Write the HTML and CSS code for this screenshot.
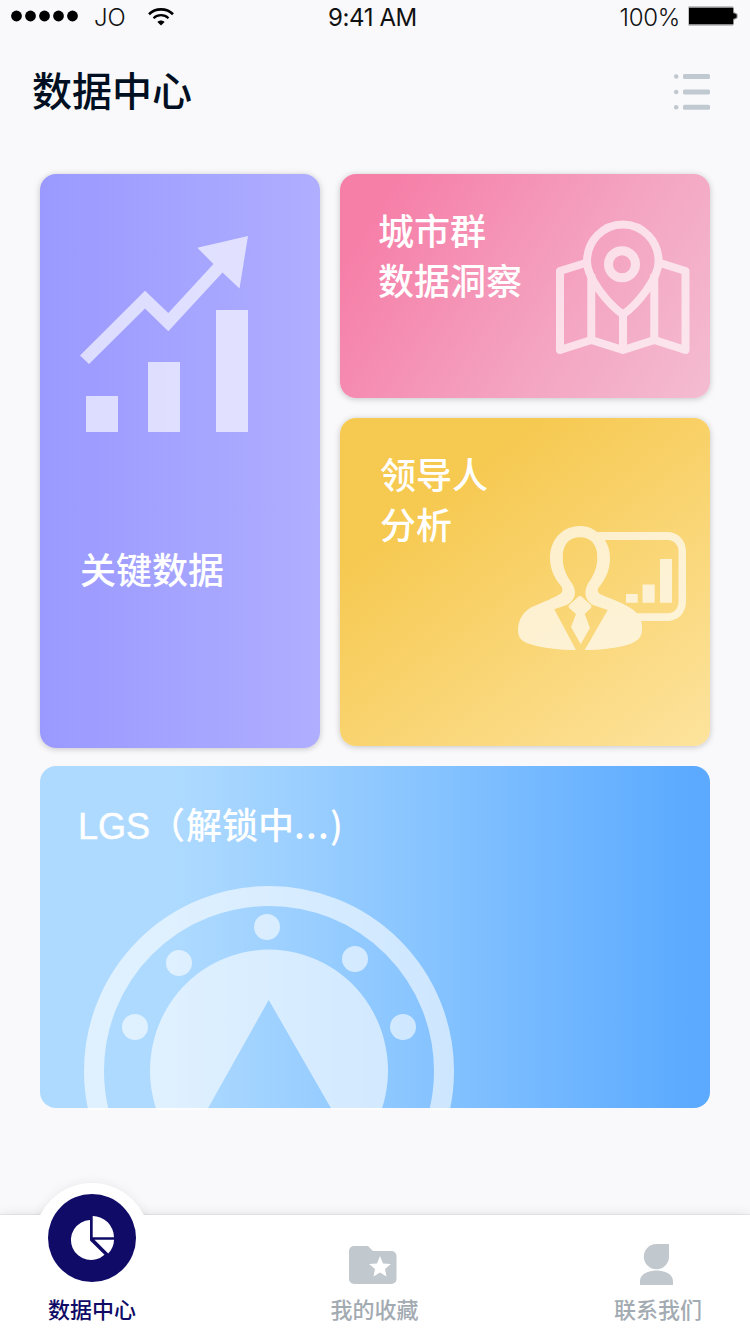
FILE: index.html
```html
<!DOCTYPE html>
<html lang="zh-CN">
<head>
<meta charset="utf-8">
<title>数据中心</title>
<link rel="stylesheet" href="styles.css">
</head>
<body>
<div class="app">
  <div class="status">
    <div class="status-left">
      <svg width="68" height="12" viewBox="0 0 68 12"><circle cx="5.5" cy="6" r="5.4"/><circle cx="19.5" cy="6" r="5.4"/><circle cx="33.5" cy="6" r="5.4"/><circle cx="47.5" cy="6" r="5.4"/><circle cx="61.5" cy="6" r="5.4"/></svg>
      <span class="carrier">JO</span>
      <svg class="wifi" width="26" height="18" viewBox="0 0 26 18" fill="none" stroke="#000" stroke-width="2.6"><path d="M1 6.2C7.5-.2 18.5-.2 25 6.2"/><path d="M5.5 10.2c4.2-4 10.8-4 15 0" stroke-width="2.2"/><path d="M13 17.5l-3.600-3.600c2-2 5.200-2 7.200 0z" fill="#000" stroke="none"/></svg>
    </div>
    <span class="time">9:41 AM</span>
    <div class="status-right">
      <span class="percent">100%</span>
      <svg width="50" height="20" viewBox="0 0 50 20"><path d="M.5.5h44l1.500 1.500v4l3.500 2v4l-3.500 2v4l-1.500 1.500h-44z" fill="#8b8b8d"/><path d="M1 2h44v5l3.500 1.500v3L45 13v5H1z"/></svg>
    </div>
  </div>

  <header class="header">
    <h1 class="title">数据中心</h1>
    <svg width="36" height="36" viewBox="0 0 36 36" fill="#c1c9d0"><circle cx="2.200" cy="2.500" r="2.300"/><circle cx="2.200" cy="18" r="2.300"/><circle cx="2.200" cy="33.300" r="2.300"/><rect x="9" width="27" height="5" rx="1.500"/><rect x="9" y="15.400" width="27" height="5" rx="1.500"/><rect x="9" y="30.800" width="27" height="5" rx="1.500"/></svg>
  </header>

  <main class="cards">
    <section class="card key">
      <svg width="168" height="196" viewBox="0 0 168 196" fill="#fff" fill-opacity=".65"><path d="M168 0l-8.500 52.500L142.500 36.500 88.300 95.300 65 72.500 9 128 0 119.500 65 54.700 88.300 77 133.500 28 117.300 11.700z"/><path d="M6 160h32v36H6zM68 126h32v70H68zM136 74h32v122h-32z"/></svg>
      <h2 class="label">关键数据</h2>
    </section>
    <div class="stack">
      <section class="card city">
        <h2 class="label">城市群<br>数据洞察</h2>
        <svg class="city-icon" width="134" height="135" viewBox="0 0 134 135" fill="none" stroke="#fff" stroke-width="8" stroke-linejoin="round">
          <g opacity=".65"><path d="M29.500 43L4 51v79l31.300-10L67 130l31.300-10L129.500 130V51L104 43"/><path d="M35.300 54v66M67 93v37M98.300 54v66"/><path d="M67 94.500C52 84 31 58 31 41.500a35.800 37 0 0 1 71.600 0C102.600 58 82 84 67 94.500z"/><circle cx="66" cy="44.300" r="13.500" stroke-width="9"/></g>
        </svg>
      </section>
      <section class="card leader">
        <h2 class="label">领导人<br>分析</h2>
        <svg class="leader-icon" width="168" height="124" viewBox="0 0 168 124">
          <g fill="#fff" opacity=".68">
            <path fill-rule="evenodd" d="M62 0C44 0 32 14 32 32C32 45 38 54 43 60C45 63 45 66 42 68C36 72 25 76 13.700 81C5 86 0 94 0 104C0 112 4 116 12 118C24 122 42 124 58 124L36.300 83.300 48.700 79C58 74 59 65 54 57.500C49 50 44.700 43 44.700 31C44.700 19 51 11.300 62 11.300C73 11.300 79.300 19 79.300 31C79.300 43 75 50 70 57.500C66 65 66 74 75 79L89.700 84 66.700 124C82 124 100 122 112 118C120 115 124 111 124 103C124 100 124 98 123 95H149C160 95 168 87 168 76V25C168 14 160 6 149 6H79C74 2 69 0 62 0zM87 14H150C156 14 160.500 19 160.500 25V76C160.500 82 156 87.300 150 87.300H119C110 78 95 74 82 68C79 66 79 63 82 60C89 51 92 42 92 32C92 25 90 19 87 14z"/>
            <path d="M60.500 70.500q1.500-1 3 0l9.500 8.500q1 1.500 0 3L66.700 88 72 102 62.700 118.300 53 101 58 88 51 82q-1-1.500 0-3z"/>
            <path d="M108 68h11.700v8.700H108zM124.500 58.500h12.200v18.200h-12.200zM142 33h12v43.700h-12z"/>
          </g>
        </svg>
      </section>
    </div>
    <section class="card lgs">
      <h2 class="label"><span class="latin">LGS</span><span class="open">（</span>解锁中<span class="dots">...</span><span class="close">)</span></h2>
      <svg class="dial" width="371" height="225" viewBox="0 0 371 225" fill="#fff" fill-opacity=".6">
        <circle cx="185" cy="186" r="175" fill="none" stroke="#fff" stroke-opacity=".6" stroke-width="20"/>
        <circle cx="183" cy="42" r="13"/><circle cx="95" cy="78" r="13"/><circle cx="271" cy="74" r="13"/><circle cx="51" cy="142" r="13"/><circle cx="319" cy="142" r="13"/>
        <path d="M72.500 225A119 121 0 1 1 297.500 225H248L184.700 115 123 225z"/>
      </svg>
    </section>
  </main>

  <nav class="tabs">
    <div class="tab active">
      <div class="bubble">
        <svg width="88" height="88" viewBox="0 0 88 88"><circle cx="44" cy="44" r="44" fill="#100b66"/><path fill="#fff" d="M42 26v20.500l14.500 14.200A20 20 0 1 1 42 26zM44.700 22A21.500 21.500 0 0 1 66 43.300H44.700zM46.500 45.800H66c0 5-2 10-5.800 13.700z"/></svg>
      </div>
      <span>数据中心</span>
    </div>
    <div class="tab favorites">
      <svg width="48" height="38" viewBox="0 0 48 38" fill="#c1c8ce"><path fill-rule="evenodd" d="M5 0h14l5 5h18.500a5 5 0 0 1 5 5v23a5 5 0 0 1-5 5H5a5 5 0 0 1-5-5V5a5 5 0 0 1 5-5zm26 10l-3 7.500-8 .5 6 5-1.500 7.500 6.500-4 6.500 4L36 23l6-5-8-.5z"/></svg>
      <span>我的收藏</span>
    </div>
    <div class="tab contact">
      <svg width="34" height="41" viewBox="0 0 34 41" fill="#c1c8ce"><path d="M16.500 0H29v12a12.600 12.600 0 1 1-12.500-12zM0 41V37c0-14 33-14 33 0v4z"/></svg>
      <span>联系我们</span>
    </div>
  </nav>
</div>
</body>
</html>
```
FILE: styles.css
```css
* { box-sizing: border-box; }
body {
  margin: 0;
  background: #f9f9fb;
  font-family: "Liberation Sans", "Noto Sans CJK SC", sans-serif;
}
svg { display: block; flex: none; }
h1, h2 { margin: 0; font-weight: 500; }

.app { width: 750px; height: 1334px; display: flex; flex-direction: column; overflow: hidden; }

.status {
  height: 34px;
  display: grid;
  grid-template-columns: 1fr auto 1fr;
  padding: 0 12px 0 11px;
  font: 300 24px/36px Inter, sans-serif;
  color: #111;
}
.status-left, .status-right { display: flex; }
.status-left svg { margin-top: 10px; }
.status-left .wifi { margin-top: 8px; }
.carrier { width: 32px; margin: 0 22px 0 15px; }
.time { font-weight: 400; letter-spacing: -0.4px; margin-right: 4px; }
.status-right { justify-content: flex-end; gap: 8px; }
.status-right svg { margin-top: 6px; }
.percent { letter-spacing: -0.3px; }

.header {
  height: 140px;
  display: flex;
  justify-content: space-between;
  align-items: flex-start;
  padding: 25px 40px 0 32px;
}
.header svg { margin-top: 15px; }
.title { font-family: "Noto Sans CJK SC", sans-serif; font-size: 40px; line-height: 60px; color: #000f22; }

.cards {
  display: grid;
  grid-template-columns: 280px 370px;
  column-gap: 20px;
  row-gap: 18px;
  padding: 0 40px;
}
.card { border-radius: 16px; display: flex; box-shadow: 0 1px 6px rgba(0, 0, 0, .21); }
.stack { display: flex; flex-direction: column; gap: 20px; }
.label { color: #fff; font-size: 36px; line-height: 50px; white-space: nowrap; }

.key {
  height: 574px;
  flex-direction: column;
  gap: 115px;
  padding: 62px 40px 0;
  background: linear-gradient(90deg, #9a99ff, #afaeff);
}
.city {
  height: 224px;
  justify-content: space-between;
  padding: 34px 20px 0 38px;
  background: linear-gradient(122deg, #f67fa8 12%, #f4a4c1 61%, #f4bcd0);
}
.city-icon { margin-top: 12px; }
.leader {
  height: 328px;
  justify-content: space-between;
  padding: 34px 24px 0 40px;
  background: linear-gradient(143deg, #f6c951 25%, #fde39d);
}
.leader-icon { margin-top: 74px; }
.lgs {
  grid-column: 1 / 3;
  height: 342px;
  flex-direction: column;
  justify-content: space-between;
  padding: 32px 38px 0;
  background: linear-gradient(90deg, #aedaff 20%, #8bc6ff 54%, #5baaff 97%);
  box-shadow: none;
}
.latin { -webkit-text-stroke: .5px #fff; }
.open { margin: 0 1px 0 -1px; }
.dots { font-family: "Noto Sans CJK SC", sans-serif; letter-spacing: 1.2px; }
.close { font-family: "Noto Sans CJK SC", sans-serif; }
.dial { margin: 0 0 -2px 6px; }

.tabs {
  height: 119px;
  margin-top: auto;
  display: flex;
  justify-content: space-between;
  padding: 0 48px;
  background: #fff;
  box-shadow: 0 0 12px rgba(0, 0, 0, .1), 0 -1px 1px rgba(30, 30, 70, .06);
}
.tab {
  width: 88px;
  display: flex;
  flex-direction: column;
  align-items: center;
  color: #a3abb2;
  font-size: 22px;
  font-weight: 500;
  line-height: 32px;
  white-space: nowrap;
}
.tab > span { margin-top: auto; margin-bottom: 7px; }
.active { color: #100b66; }
.bubble {
  position: relative;
  width: 116px;
  height: 99px;
  flex: none;
  margin-top: -32px;
  padding: 11px 14px 0;
}
/* raised white disc, visible only above the bar's top edge */
.bubble::before {
  content: "";
  position: absolute;
  left: 0;
  top: 0;
  width: 116px;
  height: 116px;
  border-radius: 50%;
  background: #fff;
  box-shadow: 0 0 12px rgba(0, 0, 0, .07);
  clip-path: inset(-20px -20px 84px);
}
.bubble svg { position: relative; left: -1px; }
.bubble svg { left: 0; }
.favorites { padding-top: 31px; margin-left: -1px; }
.favorites svg { margin-right: 4px; }
.contact { padding-top: 29px; }
.contact svg { margin-right: 2px; }
```
